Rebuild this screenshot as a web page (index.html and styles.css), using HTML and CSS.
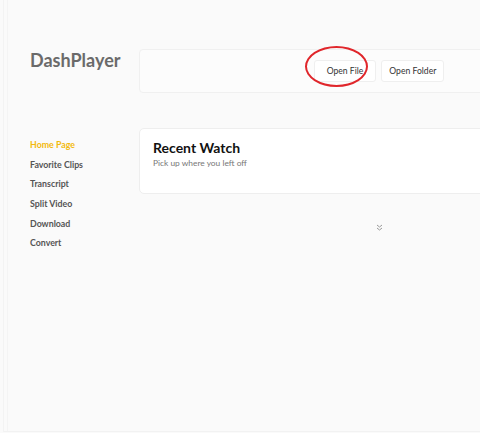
FILE: index.html
```html
<!DOCTYPE html>
<html lang="en">
<head>
  <meta charset="UTF-8" />
  <meta name="viewport" content="width=device-width, initial-scale=1.0" />
  <title>DashPlayer</title>
  <link rel="stylesheet" href="styles.css">
</head>
<body>
  <div class="frame">
    <div class="app">
      <div class="logo">DashPlayer</div>

      <div class="toolbar">
        <button class="btn btn-marked">Open File</button>
        <button class="btn">Open Folder</button>
      </div>

      <ul class="nav">
        <li class="active">Home Page</li>
        <li>Favorite Clips</li>
        <li>Transcript</li>
        <li>Split Video</li>
        <li>Download</li>
        <li>Convert</li>
      </ul>

      <div class="content">
        <div class="card">
          <h2>Recent Watch</h2>
          <p>Pick up where you left off</p>
        </div>
        <div class="more">
          <svg width="7" height="7" viewBox="0 0 7 7" fill="none" stroke="#9a9a9a" stroke-width="1">
            <path d="M1 1l2.5 2 2.5-2M1 4l2.5 2 2.5-2" />
          </svg>
        </div>
      </div>
    </div>
  </div>
</body>
</html>
```

FILE: styles.css
```css
html, body {
  margin: 0;
  overflow: hidden;
  background: #fafafa;
  font-family: Lato, "Open Sans", sans-serif;
}
.frame {
  height: 431px;
  margin-left: 3px;
  border-left: 1px solid #f3f3f3;
  border-bottom: 1px solid #f2f2f2;
  padding-left: 3px;
}
.app {
  height: 431px;
  border-left: 1px solid #f4f4f4;
  display: grid;
  grid-template-columns: 131px 480px;
  grid-template-rows: 44px auto;
  row-gap: 35px;
  padding-top: 49px;
  box-sizing: border-box;
}
.logo {
  padding: 0 0 0 22px;
  font-size: 18px;
  font-weight: 700;
  color: #6a6a6a;
  line-height: 22px;
}
.toolbar {
  display: flex;
  justify-content: center;
  align-items: center;
  gap: 5px;
  background: #fcfcfc;
  border: 1px solid #f0f0f0;
  border-radius: 4px;
}
.btn {
  position: relative;
  height: 22px;
  padding: 0 7px;
  font-family: inherit;
  font-size: 8.6px;
  color: #333;
  background: #fff;
  border: 1px solid #efefef;
  border-radius: 3px;
}
.btn-marked {
  padding: 0 12px;
}
/* red hand-drawn ring around the first button */
.btn-marked::after {
  content: "";
  position: absolute;
  left: -10px;
  top: -15px;
  width: 59px;
  height: 37px;
  border: 2px solid #e0262b;
  border-radius: 50%;
}
.nav {
  list-style: none;
  margin: 0;
  padding: 10px 0 0 22px;
}
.nav li {
  font-size: 8.8px;
  font-weight: 700;
  color: #555;
  line-height: 13px;
  margin-bottom: 6.7px;
}
.nav li.active {
  color: #f2b90f;
}
.content {
  display: flex;
  flex-direction: column;
}
.card {
  height: 66px;
  box-sizing: border-box;
  background: #fff;
  border: 1px solid #eeeeee;
  border-radius: 5px;
  padding: 9px 13px;
}
.card h2 {
  margin: 0;
  font-size: 14px;
  font-weight: 700;
  color: #111;
  line-height: 20px;
}
.card p {
  margin: 0;
  font-size: 8.4px;
  line-height: 11px;
  color: #777;
}
.more {
  display: flex;
  justify-content: center;
  padding-top: 30px;
}
```
